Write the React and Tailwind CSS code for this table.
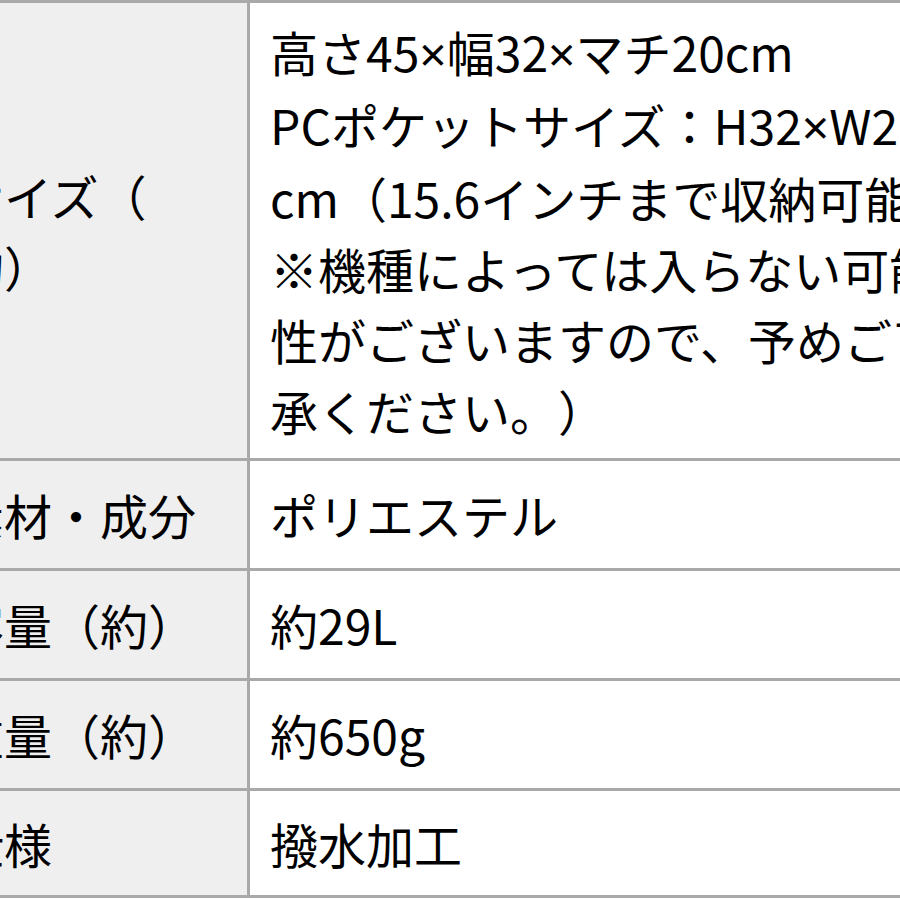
const X = () => (
  <span style={{ fontFamily: '"Noto Sans", sans-serif' }}>×</span>
);

export default function App() {
  const rows = [
    { label: "素材・成分", value: "ポリエステル" },
    { label: "容量（約）", value: "約29L" },
    { label: "重量（約）", value: "約650g" },
    { label: "仕様", value: "撥水加工", last: true },
  ];

  return (
    <div
      className="w-[900px] h-[900px] overflow-hidden bg-white text-black text-[48px] leading-[71px] [text-spacing-trim:space-all]"
      style={{ fontFamily: '"Noto Sans CJK JP", "Noto Sans", sans-serif' }}
    >
      <div className="-ml-[64px] w-[1100px] border-t-[3px] border-[#a9a9a9]">
        {/* size row */}
        <div className="flex h-[458px] border-b-[3px] border-[#a9a9a9]">
          <div className="w-[314px] shrink-0 flex items-center pl-[20px] bg-[#efefef] border-r-[3px] border-[#a9a9a9] whitespace-nowrap">
            <div>
              サイズ（
              <br />
              約）
            </div>
          </div>
          <div className="flex-1 flex items-center pl-[20px] whitespace-nowrap">
            <div>
              高さ45<X />幅32<X />マチ20cm
              <br />
              PCポケットサイズ：H32<X />W27<X />D3
              <br />
              cm（15.6インチまで収納可能
              <br />
              ※機種によっては入らない可能
              <br />
              性がございますので、予めご了
              <br />
              承ください。）
            </div>
          </div>
        </div>

        {rows.map((r) => (
          <div
            key={r.value}
            className={`flex border-b-[3px] border-[#a9a9a9] ${r.last ? "h-[107px]" : "h-[110px]"}`}
          >
            <div className="w-[314px] shrink-0 flex items-center pl-[20px] bg-[#efefef] border-r-[3px] border-[#a9a9a9] whitespace-nowrap">
              {r.label}
            </div>
            <div className="flex-1 flex items-center pl-[20px] whitespace-nowrap">
              {r.value}
            </div>
          </div>
        ))}
      </div>
    </div>
  );
}
